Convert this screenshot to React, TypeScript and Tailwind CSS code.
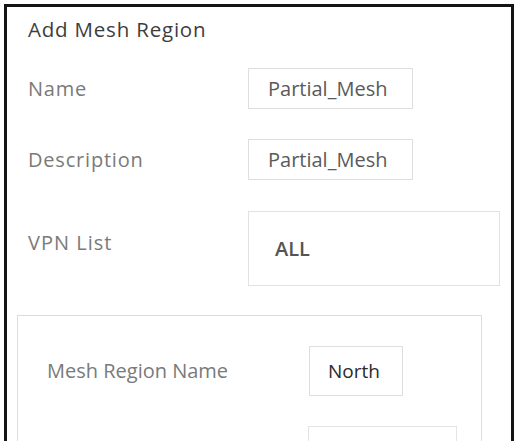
export default function App() {
  return (
    <div className="min-h-screen bg-white pl-1 pt-1" style={{ fontFamily: '"Open Sans", "Liberation Sans", sans-serif' }}>
      <div className="w-[510px] h-[437px] overflow-hidden border-[3px] border-b-0 border-[#141414] bg-white">
        <h2 className="ml-[21px] mt-[8px] text-[20.5px] leading-[28px] tracking-[0.8px] text-[#3d3d3d]">Add Mesh Region</h2>

        <div className="ml-[21px] mt-[25px] flex items-center">
          <span className="w-[220px] text-[20px] leading-[28px] tracking-[0.8px] text-[#7a7a7a]">Name</span>
          <div className="flex h-[41px] w-[165px] items-center border border-[#dedede] pl-[19px] text-[20px] text-[#5a5a5a]">
            Partial_Mesh
          </div>
        </div>

        <div className="ml-[21px] mt-[30px] flex items-center">
          <span className="w-[220px] text-[20px] leading-[28px] tracking-[0.8px] text-[#7a7a7a]">Description</span>
          <div className="flex h-[41px] w-[165px] items-center border border-[#dedede] pl-[19px] text-[20px] text-[#5a5a5a]">
            Partial_Mesh
          </div>
        </div>

        <div className="ml-[21px] mt-[31px] flex items-start">
          <span className="mt-[18px] w-[220px] text-[20px] leading-[28px] tracking-[1px] text-[#7a7a7a]">VPN List</span>
          <div className="flex h-[75px] w-[252px] items-center border border-[#e2e2e2] pl-[26px]">
            <span className="text-[20px] font-semibold text-[#555]">ALL</span>
          </div>
        </div>

        <div className="ml-[10px] mt-[29px] h-[200px] w-[465px] border border-[#dcdcdc] pl-[29px] pt-[30px]">
          <div className="flex items-center">
            <span className="w-[262px] text-[20px] leading-[28px] text-[#7a7a7a]">Mesh Region Name</span>
            <div className="flex h-[50px] w-[94px] items-center border border-[#dedede] pl-[18px] text-[19px] font-medium text-[#2a2a2a]">
              North
            </div>
          </div>
          <div className="mt-[30px] flex items-center">
            <span className="w-[261px]" />
            <div className="h-[50px] w-[149px] border border-[#e4e4e4]" />
          </div>
        </div>
      </div>
    </div>
  );
}
